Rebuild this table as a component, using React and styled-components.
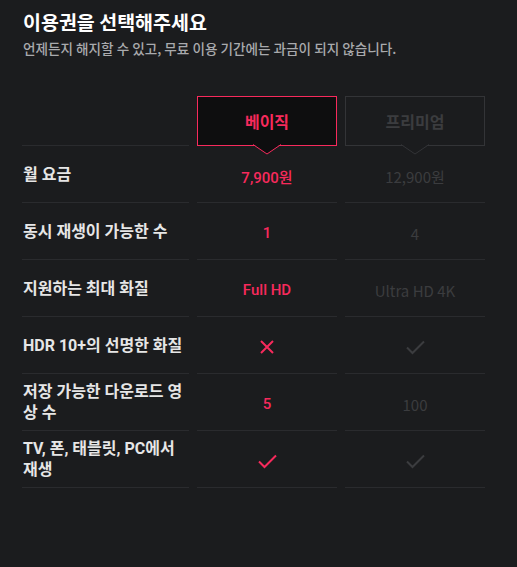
import React from 'react';
import styled, { createGlobalStyle } from 'styled-components';

const PINK = '#f72a5c';
const DIM = '#3b3c3f';
const LINE = '#2a2b2e';

const GlobalStyle = createGlobalStyle`
  html, body {
    margin: 0;
    padding: 0;
    background: #1b1c1e;
  }
  body {
    font-family: 'Roboto', 'Noto Sans CJK KR', sans-serif;
  }
`;

const Page = styled.div`
  padding: 8px 22px 40px 22px;
  min-height: 567px;
  box-sizing: border-box;
  background: #1b1c1e;
`;

const Title = styled.h1`
  margin: 0;
  font-family: 'Noto Sans CJK KR', sans-serif;
  font-size: 19.5px;
  font-weight: 700;
  line-height: 28px;
  color: #ffffff;
  padding-left: 1px;
`;

const Subtitle = styled.p`
  margin: 3px 0 0 1px;
  font-family: 'Noto Sans CJK KR', sans-serif;
  font-size: 13.6px;
  font-weight: 500;
  line-height: 18px;
  color: #a9aaad;
`;

const Table = styled.div`
  display: grid;
  grid-template-columns: 167px 140px 140px;
  column-gap: 8px;
  margin-top: 39px;
`;

const HeadBlank = styled.div`
  height: 50px;
  border-bottom: 1px solid ${LINE};
  box-sizing: border-box;
`;

const PlanBox = styled.div`
  position: relative;
  height: 50px;
  box-sizing: border-box;
  display: flex;
  align-items: center;
  justify-content: center;
  font-family: 'Noto Sans CJK KR', sans-serif;
  font-size: 16px;
  font-weight: 700;
  color: ${p => (p.$active ? PINK : DIM)};
  background: ${p => (p.$active ? '#0e0e0f' : '#1b1c1e')};
  border: 1px solid ${p => (p.$active ? PINK : '#333437')};
`;

const Pointer = styled.svg`
  position: absolute;
  left: 50%;
  bottom: -10px;
  margin-left: -14px;
  overflow: visible;
`;

const Label = styled.div`
  height: 57px;
  box-sizing: border-box;
  border-bottom: 1px solid ${LINE};
  display: flex;
  align-items: center;
  padding-left: 1px;
  font-size: 16px;
  font-weight: 700;
  line-height: 21px;
  color: #e6e6e6;
`;

const Value = styled.div`
  height: 57px;
  box-sizing: border-box;
  padding-top: 4px;
  border-bottom: 1px solid ${LINE};
  display: flex;
  align-items: center;
  justify-content: center;
  font-family: ${p => (p.$active ? "'Roboto', 'Noto Sans CJK KR', sans-serif" : "'Noto Sans CJK KR', sans-serif")};
  font-size: 15px;
  font-weight: ${p => (p.$active ? 500 : 400)};
  color: ${p => (p.$active ? PINK : DIM)};
`;

const Check = ({ color }) => (
  <svg width="19" height="15" viewBox="0 0 19 15">
    <polyline points="1,7.5 6.5,13 18,1.5" fill="none" stroke={color} strokeWidth="2" />
  </svg>
);

const Cross = ({ color }) => (
  <svg width="14" height="14" viewBox="0 0 14 14">
    <path d="M1 1 L13 13 M13 1 L1 13" stroke={color} strokeWidth="2" />
  </svg>
);

const PlanHead = ({ active, children }) => (
  <PlanBox $active={active}>
    {children}
    <Pointer width="28" height="11" viewBox="0 0 28 11">
      <polygon points="0,0 14,10 28,0" fill={active ? '#0e0e0f' : '#1b1c1e'} />
      <polyline points="0,0.5 14,10 28,0.5" fill="none" stroke={active ? PINK : '#333437'} strokeWidth="1" />
    </Pointer>
  </PlanBox>
);

const rows = [
  { label: '월 요금', basic: '7,900원', premium: '12,900원' },
  { label: '동시 재생이 가능한 수', basic: '1', premium: '4' },
  { label: '지원하는 최대 화질', basic: 'Full HD', premium: 'Ultra HD 4K' },
  { label: 'HDR 10+의 선명한 화질', basic: 'x', premium: 'v' },
  { label: '저장 가능한 다운로드 영상 수', basic: '5', premium: '100' },
  { label: 'TV, 폰, 태블릿, PC에서 재생', basic: 'v', premium: 'v' },
];

const renderValue = (v, color) => {
  if (v === 'v') return <Check color={color} />;
  if (v === 'x') return <Cross color={color} />;
  return v;
};

export default function App() {
  return (
    <Page>
      <GlobalStyle />
      <Title>이용권을 선택해주세요</Title>
      <Subtitle>언제든지 해지할 수 있고, 무료 이용 기간에는 과금이 되지 않습니다.</Subtitle>
      <Table>
        <HeadBlank />
        <PlanHead active>베이직</PlanHead>
        <PlanHead>프리미엄</PlanHead>
        {rows.map(r => (
          <React.Fragment key={r.label}>
            <Label>{r.label}</Label>
            <Value $active>{renderValue(r.basic, PINK)}</Value>
            <Value>{renderValue(r.premium, DIM)}</Value>
          </React.Fragment>
        ))}
      </Table>
    </Page>
  );
}
